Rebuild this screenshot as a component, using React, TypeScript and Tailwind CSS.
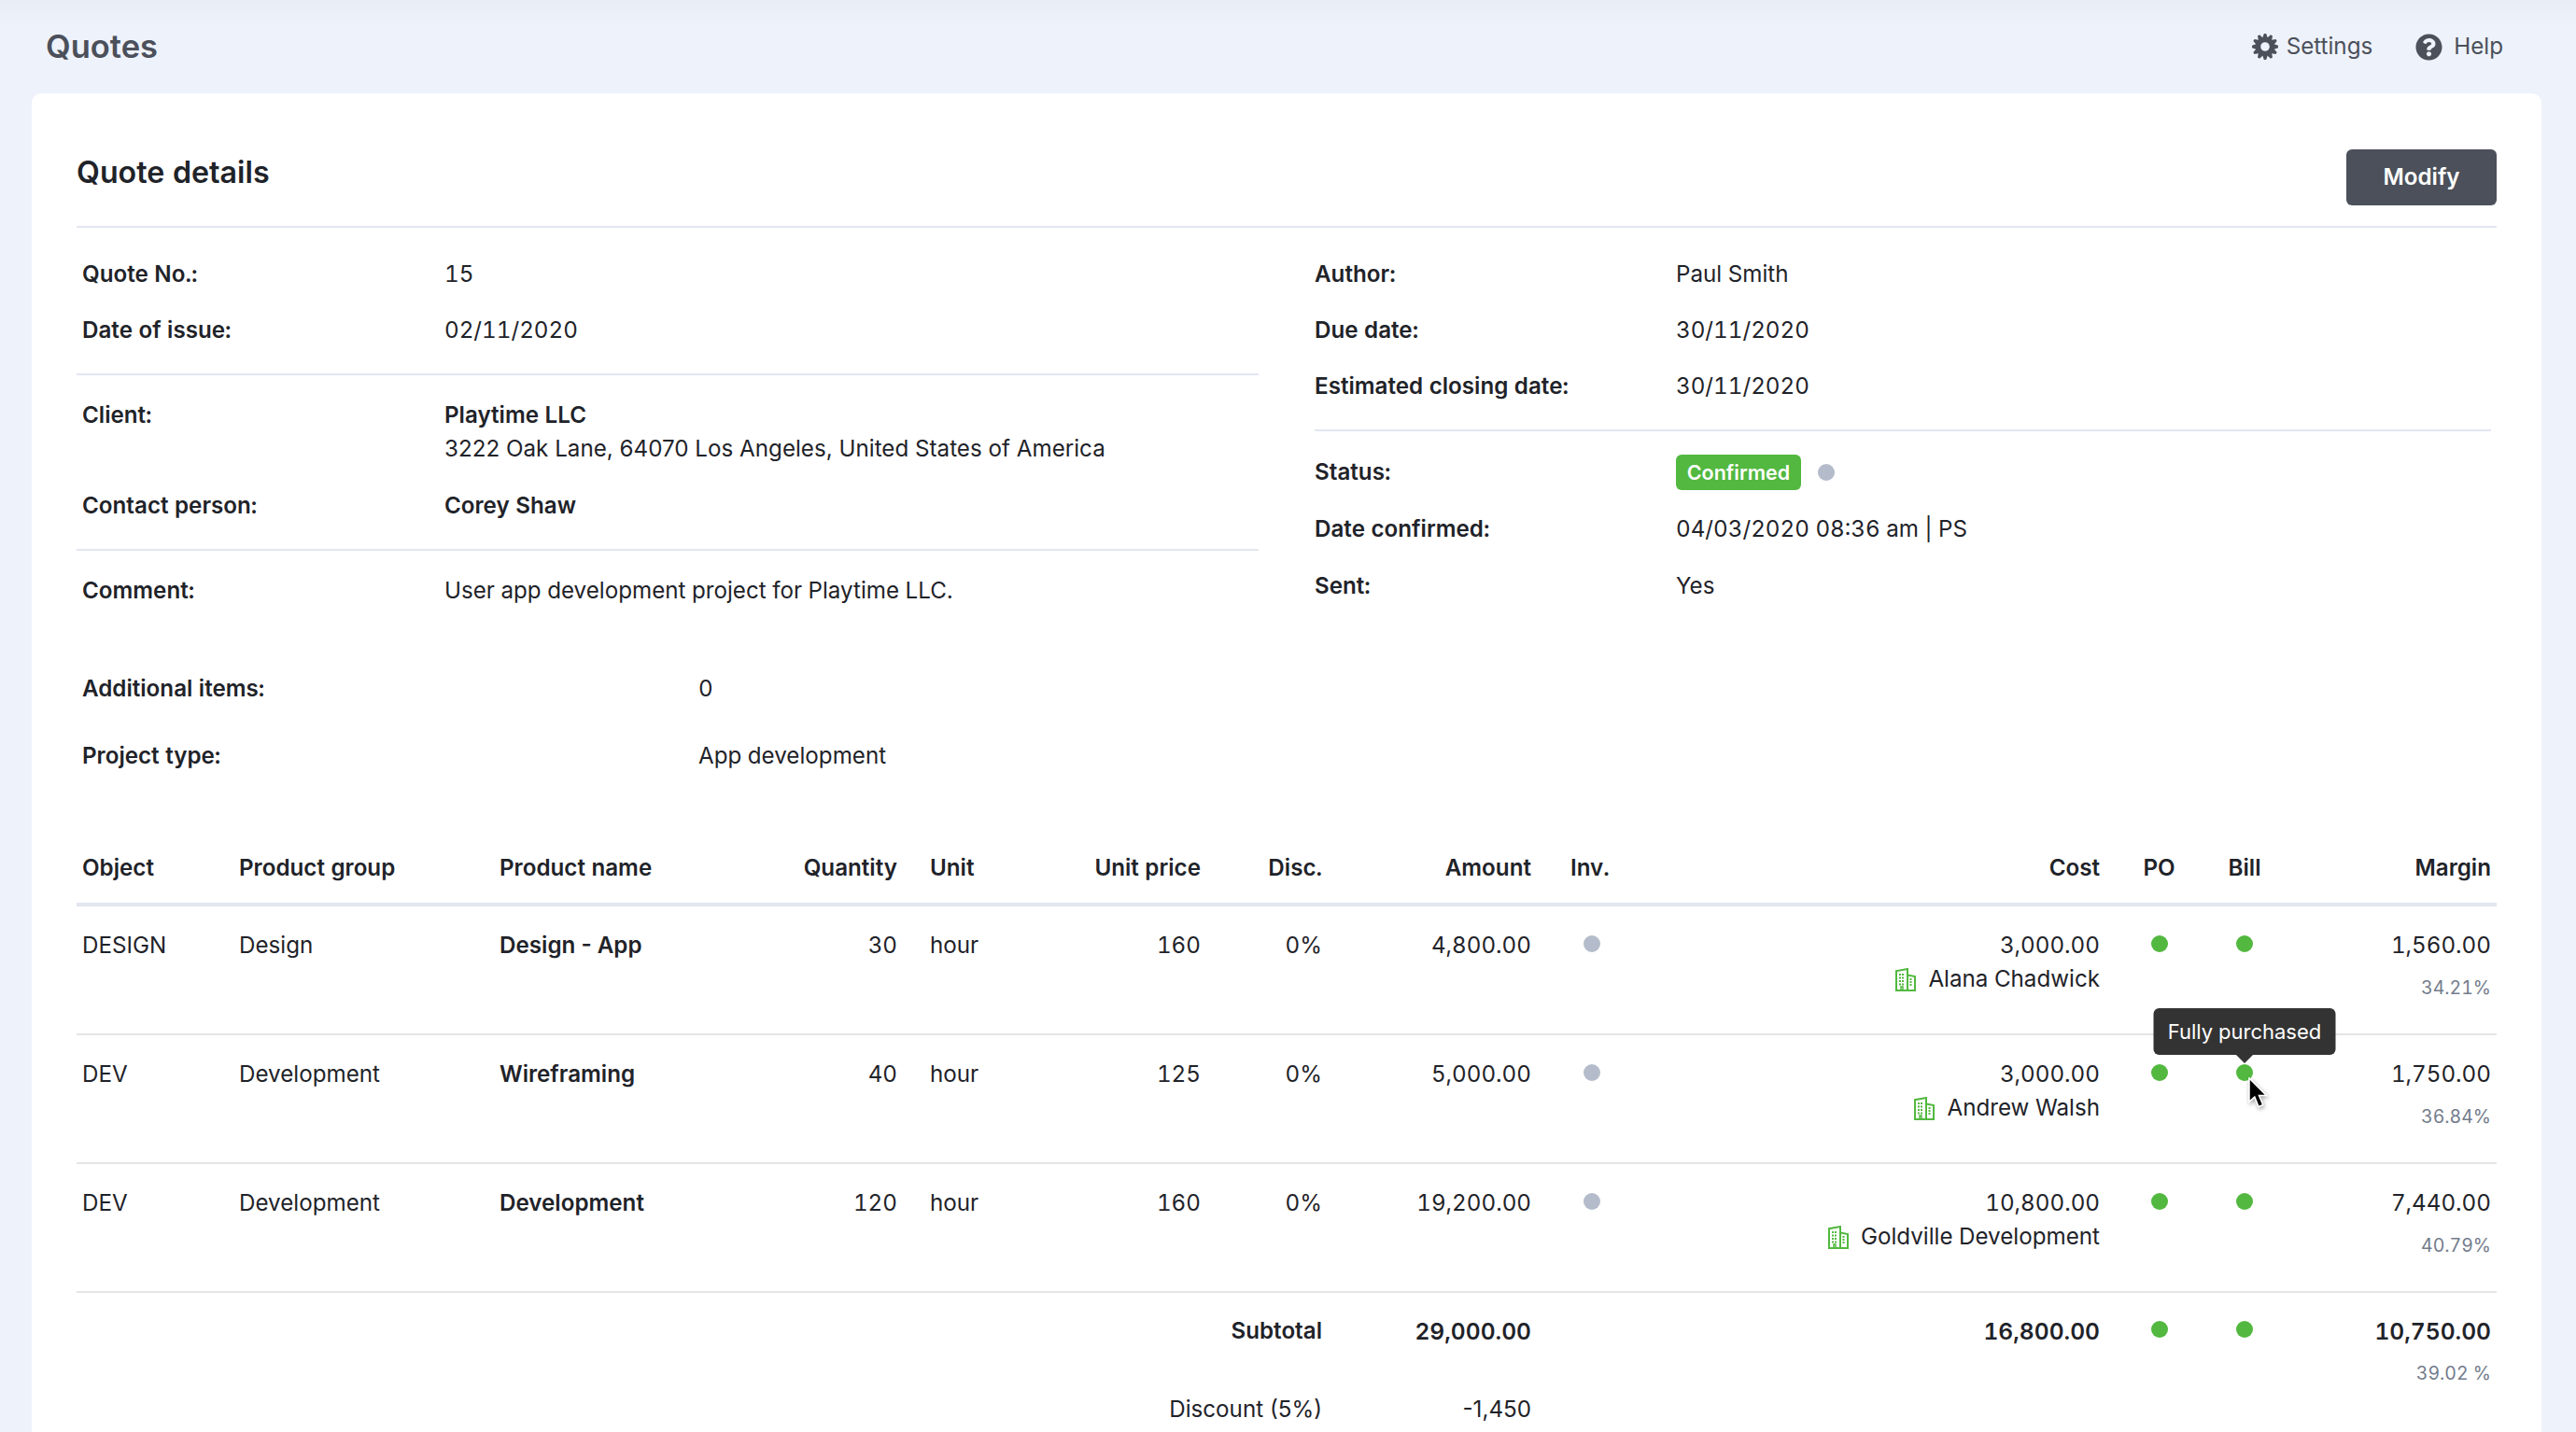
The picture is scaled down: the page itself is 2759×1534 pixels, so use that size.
import type { ReactNode } from 'react';
import { FaQuestionCircle } from 'react-icons/fa';

const cols =
  'grid grid-cols-[167px_280px_271px_167px_133px_192px_130px_224px_154px_455px_115px_68px_236px]';

const rows = [
  { obj: 'DESIGN', group: 'Design', name: 'Design - App', qty: '30', price: '160', amount: '4,800.00', cost: '3,000.00', vendor: 'Alana Chadwick', margin: '1,560.00', pct: '34.21%' },
  { obj: 'DEV', group: 'Development', name: 'Wireframing', qty: '40', price: '125', amount: '5,000.00', cost: '3,000.00', vendor: 'Andrew Walsh', margin: '1,750.00', pct: '36.84%', tip: true },
  { obj: 'DEV', group: 'Development', name: 'Development', qty: '120', price: '160', amount: '19,200.00', cost: '10,800.00', vendor: 'Goldville Development', margin: '7,440.00', pct: '40.79%' },
];

// 12 tooth gear, hole punched with evenodd
function gearPath() {
  const pts: string[] = [];
  const teeth = 12;
  for (let i = 0; i < teeth; i++) {
    const a = (i / teeth) * Math.PI * 2;
    const step = (Math.PI * 2) / teeth;
    [
      [a - step * 0.5, 10.2],
      [a - step * 0.16, 14],
      [a + step * 0.16, 14],
    ].forEach(([t, r]) => pts.push(`${(14 + r * Math.cos(t)).toFixed(2)} ${(14 + r * Math.sin(t)).toFixed(2)}`));
  }
  return `M${pts.join('L')}Z M14 9.2a4.8 4.8 0 1 0 0 9.6a4.8 4.8 0 1 0 0-9.6Z`;
}

function GearIcon() {
  return (
    <svg width="28" height="28" viewBox="0 0 28 28" className="text-[#4b505a]">
      <path d={gearPath()} fill="currentColor" fillRule="evenodd" />
    </svg>
  );
}

function BuildingIcon() {
  return (
    <svg width="22" height="25" viewBox="0 0 22 25" fill="none" className="shrink-0 text-[#52b83f]">
      <path d="M1 24V3.2L13 1v23M13 7.5l8 1.6V24M0 24h22" stroke="currentColor" strokeWidth="2" />
      <path d="M4 7h6M4 10.5h6M4 14h6M4 17.5h6M15.5 12h3M15.5 15h3M15.5 18h3" stroke="currentColor" strokeWidth="2" strokeDasharray="2 1" />
      <path d="M6 24v-4h2v4" stroke="currentColor" strokeWidth="1.5" />
    </svg>
  );
}

function CursorIcon() {
  return (
    <svg width="24" height="38" viewBox="0 0 22 36" className="drop-shadow-[1px_2px_2px_rgba(0,0,0,0.35)]">
      <path d="M1.5 1v24l5.5-5 4 10 4.500-2-4-9.500h7.500z" fill="#000" stroke="#fff" strokeWidth="1.500" />
    </svg>
  );
}

function Dot({ grey, tip }: { grey?: boolean; tip?: boolean }) {
  return (
    <span className={`relative block h-[18px] w-[18px] rounded-full ${grey ? 'bg-[#b4bccb]' : 'bg-[#52b83f]'}`}>
      {tip && (
        <>
          <span className="absolute bottom-[28px] left-1/2 z-10 flex h-[50px] w-[195px] -translate-x-1/2 items-center justify-center rounded-[6px] bg-[#333333] text-[22px] text-white">
            Fully purchased
          </span>
          <span className="absolute bottom-[19px] left-1/2 z-10 h-0 w-0 -translate-x-1/2 border-x-[9px] border-t-[9px] border-x-transparent border-t-[#333333]" />
          <span className="absolute left-[12px] top-[14px] z-20">
            <CursorIcon />
          </span>
        </>
      )}
    </span>
  );
}

function Info({ label, children, w }: { label: string; children: ReactNode; w: string }) {
  return (
    <div className="flex min-h-[36px]">
      <div className={`${w} shrink-0 font-semibold`}>{label}</div>
      <div>{children}</div>
    </div>
  );
}

export default function App() {
  return (
    <div className="h-[1534px] overflow-hidden bg-[#eef2fb] font-['Inter',sans-serif] text-[24.2px] leading-[36px] text-[#1f2329] tabular-nums">
      {/* Top bar */}
      <header className="flex h-[100px] items-center justify-between bg-gradient-to-b from-[#e9edf5] to-[#eef2fb] to-30% pl-[49px] pr-[78px]">
        <h1 className="text-[34.500px] font-semibold text-[#4b505a]">Quotes</h1>
        <div className="flex items-center text-[#4b505a]">
          <GearIcon />
          <span className="ml-[9px]">Settings</span>
          <FaQuestionCircle className="ml-[46px] h-[29px] w-[29px]" />
          <span className="ml-[12px]">Help</span>
        </div>
      </header>

      <main className="ml-[34px] h-[1500px] w-[2688px] rounded-[10px] bg-white px-[48px] pt-[60px]">
        <div className="flex h-[84px] items-start justify-between border-b-2 border-[#e2e6ef]">
          <h2 className="text-[32.200px] font-semibold leading-[50px]">Quote details</h2>
          <button className="flex h-[60px] w-[161px] items-center justify-center rounded-[6px] bg-[#4b505a] font-semibold text-white">
            Modify
          </button>
        </div>

        {/* Quote info */}
        <div className="grid grid-cols-[1266px_1260px] gap-x-[60px] pt-[32px]">
          <div>
            <div className="flex flex-col gap-[24px] pl-[6px]">
              <Info w="w-[388px]" label="Quote No.:">15</Info>
              <Info w="w-[388px]" label="Date of issue:">02/11/2020</Info>
            </div>
            <div className="mt-[28px] flex flex-col gap-[25px] border-t-2 border-[#e2e6ef] pl-[6px] pt-[25px]">
              <Info w="w-[388px]" label="Client:">
                <div className="font-semibold">Playtime LLC</div>
                <div className="normal-nums">3222 Oak Lane, 64070 Los Angeles, United States of America</div>
              </Info>
              <Info w="w-[388px]" label="Contact person:">
                <span className="font-semibold">Corey Shaw</span>
              </Info>
            </div>
            <div className="mt-[28px] border-t-2 border-[#e2e6ef] pl-[6px] pt-[25px]">
              <Info w="w-[388px]" label="Comment:">User app development project for Playtime LLC.</Info>
            </div>
          </div>
          <div>
            <div className="flex flex-col gap-[24px]">
              <Info w="w-[387px]" label="Author:">Paul Smith</Info>
              <Info w="w-[387px]" label="Due date:">30/11/2020</Info>
              <Info w="w-[387px]" label="Estimated closing date:">30/11/2020</Info>
            </div>
            <div className="mt-[28px] flex flex-col gap-[25px] border-t-2 border-[#e2e6ef] pt-[26px]">
              <Info w="w-[387px]" label="Status:">
                <div className="flex h-[36px] items-center">
                  <span className="flex h-[38px] w-[134px] items-center justify-center rounded-[6px] bg-[#52b83f] text-[21.500px] font-semibold text-white">
                    Confirmed
                  </span>
                  <span className="ml-[18px]">
                    <Dot grey />
                  </span>
                </div>
              </Info>
              <Info w="w-[387px]" label="Date confirmed:">04/03/2020 08:36 am | PS</Info>
              <Info w="w-[387px]" label="Sent:">Yes</Info>
            </div>
          </div>
        </div>

        <div className="mt-[69px] flex flex-col gap-[36px] pl-[6px]">
          <Info w="w-[660px]" label="Additional items:">0</Info>
          <Info w="w-[660px]" label="Project type:">App development</Info>
        </div>

        {/* Line items */}
        <div className={`${cols} mt-[84px] h-[59px] border-b-4 border-[#e2e6ef] font-semibold`}>
          <div className="pl-[6px]">Object</div>
          <div className="pl-[7px]">Product group</div>
          <div className="pl-[6px]">Product name</div>
          <div className="pr-[6px] text-right">Quantity</div>
          <div className="pl-[29px]">Unit</div>
          <div className="pr-[6px] text-right">Unit price</div>
          <div className="pr-[6px] text-right">Disc.</div>
          <div className="pr-[6px] text-right">Amount</div>
          <div className="pl-[36px]">Inv.</div>
          <div className="pr-[6px] text-right">Cost</div>
          <div className="text-center">PO</div>
          <div className="text-center">Bill</div>
          <div className="pr-[6px] text-right">Margin</div>
        </div>

        {rows.map((r) => (
          <div key={r.name} className={`${cols} h-[138px] border-b-2 border-[#e5e5e5] pt-[24px]`}>
            <div className="pl-[6px]">{r.obj}</div>
            <div className="pl-[7px]">{r.group}</div>
            <div className="pl-[6px] font-semibold normal-nums">{r.name}</div>
            <div className="pr-[6px] text-right">{r.qty}</div>
            <div className="pl-[29px]">hour</div>
            <div className="pr-[6px] text-right">{r.price}</div>
            <div className="pr-[6px] text-right">0%</div>
            <div className="pr-[6px] text-right">{r.amount}</div>
            <div className="pl-[50px] pt-[7px]">
              <Dot grey />
            </div>
            <div className="pr-[6px] text-right">
              <div>{r.cost}</div>
              <div className="flex items-center justify-end gap-[13px]">
                <BuildingIcon />
                {r.vendor}
              </div>
            </div>
            <div className="flex justify-center pt-[7px]">
              <Dot />
            </div>
            <div className="flex justify-center pt-[7px]">
              <Dot tip={r.tip} />
            </div>
            <div className="pr-[6px] text-right">
              <div>{r.margin}</div>
              <div className="mt-[13px] text-[19.500px] leading-[28px] text-[#737c8c]">{r.pct}</div>
            </div>
          </div>
        ))}

        {/* Totals */}
        <div className={`${cols} pt-[23px]`}>
          <div className="col-span-7 pr-[6px] text-right font-semibold">Subtotal</div>
          <div className="pr-[6px] text-right text-[24.600px] font-semibold">29,000.00</div>
          <div />
          <div className="pr-[6px] text-right text-[24.600px] font-semibold">16,800.00</div>
          <div className="flex justify-center pt-[7px]">
            <Dot />
          </div>
          <div className="flex justify-center pt-[7px]">
            <Dot />
          </div>
          <div className="pr-[6px] text-right text-[24.600px] font-semibold">
            <div>10,750.00</div>
            <div className="mt-[13px] text-[19.500px] font-normal leading-[28px] text-[#737c8c]">39.02 %</div>
          </div>
        </div>
        <div className={`${cols} mt-[7px] normal-nums`}>
          <div className="col-span-7 pr-[6px] text-right">Discount (5%)</div>
          <div className="pr-[6px] text-right">-1,450</div>
        </div>
      </main>
    </div>
  );
}
